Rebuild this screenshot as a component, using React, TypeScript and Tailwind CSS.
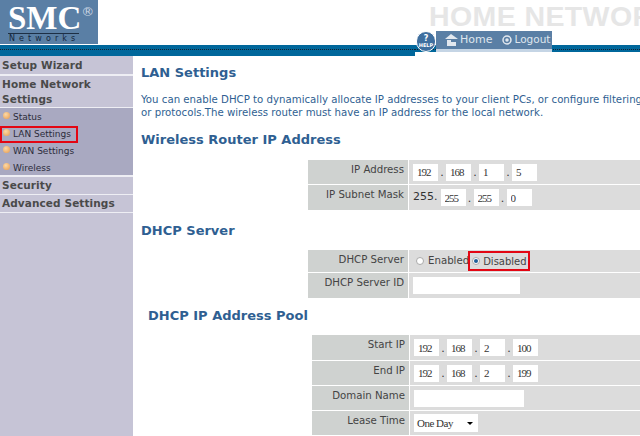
import React from 'react';

const navHead = 'px-[2px] text-[10.5px] font-bold leading-[15px] tracking-[0.1px] text-[#4a4a4a] bg-[#c6c4d6]';

function Dots({ values }: { values: string[] }) {
  return (
    <div className="flex items-center">
      {values.map((v, i) => (
        <React.Fragment key={i}>
          {i > 0 && <span className="w-[8px] text-center text-[11px] text-[#333] mt-[3px]">.</span>}
          <input
            readOnly
            value={v}
            className="h-[17px] w-[25px] bg-white pl-[4px] text-[11px] tracking-[-1px] text-[#333] outline-none [font-family:'Liberation_Serif',serif]"
          />
        </React.Fragment>
      ))}
    </div>
  );
}

function Row({ label, labelW, h, children }: { label: string; labelW: string; h: string; children: React.ReactNode }) {
  return (
    <div className={`flex gap-[1px] ${h}`}>
      <div className={`${labelW} shrink-0 bg-[#cfd2d0] pr-[4px] pt-[2px] text-right text-[10.2px] leading-[15px] text-[#444]`}>
        {label}
      </div>
      <div className="flex flex-1 items-center bg-[#dcdcdc] pl-[4px]">{children}</div>
    </div>
  );
}

function Bullet() {
  return (
    <span className="mt-[-5px] h-[7px] w-[7px] shrink-0 rounded-full bg-[radial-gradient(circle_at_40%_35%,#fbd9a8,#e89a4a)]" />
  );
}

const subItems = ['Status', 'LAN Settings', 'WAN Settings', 'Wireless'];

export default function App() {
  return (
    <div className="h-[436px] w-[640px] overflow-hidden bg-white [font-family:'DejaVu_Sans',sans-serif]">
      <header className="relative">
        <div className="flex h-[45px]">
          <div className="flex h-[44px] w-[98px] shrink-0 flex-col bg-[#5a7fa5] text-white">
            <div className="flex h-[33px] items-start pl-[8px] pt-[4px]">
              <span className="text-[33px] font-bold leading-[29px] [font-family:'Liberation_Serif',serif]">SMC</span>
              <span className="mt-[1px] text-[13px] leading-[14px] text-[#c9d5e2]">®</span>
            </div>
            <div className="ml-[8px] w-[71px] border-t border-[#1d2f45] pl-[1px] text-[8px] leading-[10px] tracking-[4.1px] text-[#14263a]">
              Networks
            </div>
          </div>
          <div className="ml-[331px] whitespace-nowrap pt-[1px] text-[28.5px] font-bold leading-[30px] tracking-[0.4px] text-[#e6e6e6] [font-family:'Liberation_Sans',sans-serif]">
            HOME NETWORK
          </div>
        </div>
        <div className="flex items-start">
          <div className="h-[11px] w-[415px] bg-[#00679b] pt-[4px]">
            <div className="border-b border-dotted border-[#123]" />
          </div>
          <div className="h-[7px] flex-1 bg-[#00679b] pt-[4px]">
            <div className="border-b border-dotted border-[#123]" />
          </div>
        </div>
        {/* help button + tab hang over the blue bar */}
        <div className="absolute left-[416px] top-[31px] flex items-start">
          <div className="z-10 flex h-[21px] w-[20px] flex-col items-center rounded-full border border-white bg-[#3f6f9f] text-[5px] font-bold leading-[5px] text-white">
            <span className="mt-[2px] text-[8px] leading-[9px]">?</span>
            <span>HELP</span>
          </div>
          <div className="flex h-[21px] w-[116px] items-center border-b-[3px] border-[#c5d5e5] bg-[#5a7fa5] pl-[9px] text-[11px] text-[#dfe6ee]">
            <svg width="13" height="12" viewBox="0 0 13 12" className="mr-[2px]" fill="#e2e8ef">
              <path d="M6 0 L13 5 L0 5 Z" />
              <path d="M2 6 H6 V8 H11 V12 H2 Z" />
            </svg>
            <span>Home</span>
            <svg width="10" height="10" viewBox="0 0 10 10" className="ml-[10px] mr-[2px]" fill="none" stroke="#e2e8ef" strokeWidth="1.5">
              <circle cx="5" cy="5" r="4" />
              <circle cx="5" cy="5" r="1" fill="#e2e8ef" />
            </svg>
            <span className="text-[10.5px]">Logout</span>
          </div>
        </div>
      </header>

      <div className="flex">
        <aside className="h-[380px] w-[133px] shrink-0 bg-[#c6c4d6]">
          <div className="h-[1px]" />
          <div className={`${navHead} h-[17px] pt-[1px]`}>Setup Wizard</div>
          <div className="h-[2px] bg-[#eeeef4]" />
          <div className={`${navHead} h-[31px] pt-[1px]`}>
            Home Network
            <br />
            Settings
          </div>
          <div className="h-[1px] bg-[#eeeef4]" />
          <div className="h-[67px] bg-[#a9a9c1] pt-[1px]">
            {subItems.map((s) => (
              <div key={s} className="flex h-[17px] items-center gap-[2px] pl-[3px] text-[9px] text-[#2c2c3a]">
                <Bullet />
                <span
                  className={s === 'LAN Settings' ? 'ml-[-12px] border-2 border-[#e30613] py-[1px] pl-[11px] pr-[5px] leading-[11px]' : 'ml-[1px]'}
                >
                  {s}
                </span>
              </div>
            ))}
          </div>
          <div className="h-[2px] bg-[#eeeef4]" />
          <div className={`${navHead} h-[17px] pt-[1px]`}>Security</div>
          <div className="h-[1px] bg-[#eeeef4]" />
          <div className={`${navHead} h-[17px] pt-[1px]`}>Advanced Settings</div>
          <div className="h-[1px] bg-[#eeeef4]" />
        </aside>

        <main className="min-w-0 flex-1 whitespace-nowrap">
          <h1 className="ml-[8px] mt-[9px] text-[13px] font-bold leading-[16px] text-[#2f5f92]">LAN Settings</h1>
          <p className="ml-[8px] mt-[12px] text-[10.2px] leading-[13px] text-[#2f5f92]">
            You can enable DHCP to dynamically allocate IP addresses to your client PCs, or configure filtering functions
            <br />
            or protocols.The wireless router must have an IP address for the local network.
          </p>
          <h2 className="ml-[8px] mt-[13px] text-[13px] font-bold leading-[16px] text-[#2f5f92]">Wireless Router IP Address</h2>

          <div className="ml-[175px] mt-[12px] flex flex-col gap-[1px]">
            <Row label="IP Address" labelW="w-[100px]" h="h-[24px]">
              <Dots values={['192', '168', '1', '5']} />
            </Row>
            <Row label="IP Subnet Mask" labelW="w-[100px]" h="h-[25px]">
              <span className="mr-[3px] text-[11px] text-[#333]">255.</span>
              <Dots values={['255', '255', '0']} />
            </Row>
          </div>

          <h2 className="ml-[8px] mt-[13px] text-[13px] font-bold leading-[16px] text-[#2f5f92]">DHCP Server</h2>

          <div className="ml-[175px] mt-[11px] flex flex-col gap-[1px]">
            <Row label="DHCP Server" labelW="w-[100px]" h="h-[22px]">
              <span className="ml-[3px] h-[8px] w-[8px] rounded-full border border-[#aaa] bg-white" />
              <span className="ml-[4px] text-[10.2px] text-[#444]">Enabled</span>
              <span className="ml-[-1px] flex h-[20px] w-[62px] items-center border-2 border-[#e30613] pl-[2px] text-[10px] text-[#444]">
                <span className="mr-[3px] flex h-[8px] w-[8px] items-center justify-center rounded-full border border-[#aaa] bg-white">
                  <span className="h-[4px] w-[4px] rounded-full bg-[#1f5f99]" />
                </span>
                Disabled
              </span>
            </Row>
            <Row label="DHCP Server ID" labelW="w-[100px]" h="h-[25px]">
              <input readOnly className="h-[17px] w-[107px] bg-white outline-none" />
            </Row>
          </div>

          <h2 className="ml-[15px] mt-[10px] text-[13px] font-bold leading-[16px] text-[#2f5f92]">DHCP IP Address Pool</h2>

          <div className="ml-[179px] mt-[11px] flex flex-col gap-[1px]">
            <Row label="Start IP" labelW="w-[97px]" h="h-[25px]">
              <Dots values={['192', '168', '2', '100']} />
            </Row>
            <Row label="End IP" labelW="w-[97px]" h="h-[24px]">
              <Dots values={['192', '168', '2', '199']} />
            </Row>
            <Row label="Domain Name" labelW="w-[97px]" h="h-[24px]">
              <input readOnly className="h-[17px] w-[110px] bg-white outline-none" />
            </Row>
            <Row label="Lease Time" labelW="w-[97px]" h="h-[24px]">
              <div className="flex h-[18px] w-[64px] items-center justify-between bg-white pl-[3px] pr-[5px] text-[11px] tracking-[-0.5px] text-[#333] [font-family:'Liberation_Serif',serif]">
                One Day
                <span className="h-0 w-0 border-x-[3px] border-t-[3px] border-x-transparent border-t-black" />
              </div>
            </Row>
          </div>
        </main>
      </div>
    </div>
  );
}
